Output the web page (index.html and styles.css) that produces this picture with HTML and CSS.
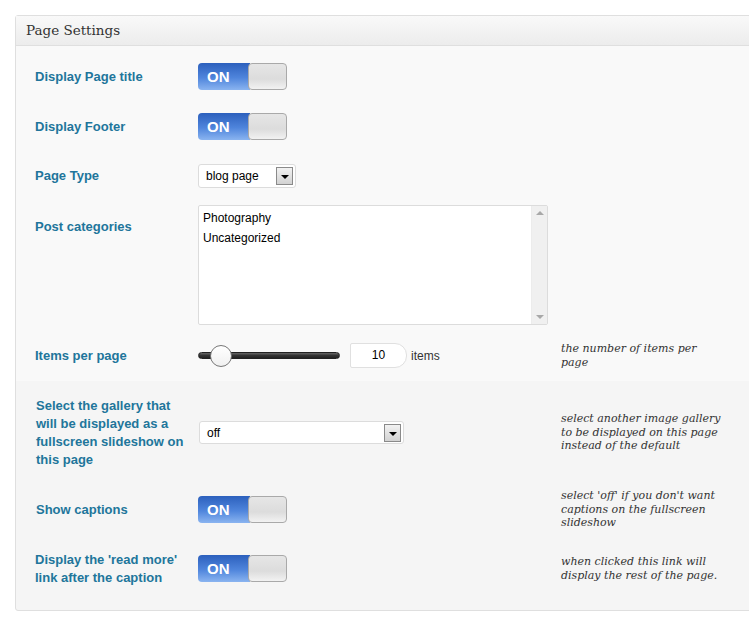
FILE: index.html
```html
<!DOCTYPE html>
<html>
<head>
<meta charset="utf-8">
<link rel="stylesheet" href="styles.css">
</head>
<body>
<div class="page">
  <div class="box">
    <div class="box-head">Page Settings</div>
    <div class="rows">
      <div class="row r1 light">
        <div class="label">Display Page title</div>
        <div class="ctrl"><div class="toggle"><span class="on">ON</span><span class="knob"></span></div></div>
        <div class="desc"></div>
      </div>
      <div class="row r2 light">
        <div class="label">Display Footer</div>
        <div class="ctrl"><div class="toggle"><span class="on">ON</span><span class="knob"></span></div></div>
        <div class="desc"></div>
      </div>
      <div class="row r3 light">
        <div class="label">Page Type</div>
        <div class="ctrl"><div class="select small"><span class="sel-text">blog page</span><span class="arrow"></span></div></div>
        <div class="desc"></div>
      </div>
      <div class="row r4 light top">
        <div class="label lab-top">Post categories</div>
        <div class="ctrl">
          <div class="listbox">
            <div class="options">
              <div class="opt">Photography</div>
              <div class="opt">Uncategorized</div>
            </div>
            <div class="scroll"><span class="up"></span><span class="down"></span></div>
          </div>
        </div>
        <div class="desc"></div>
      </div>
      <div class="row r5 light">
        <div class="label">Items per page</div>
        <div class="ctrl slider-ctrl">
          <div class="slider"><div class="track"></div><div class="handle"></div></div>
          <div class="num">10</div>
          <span class="unit">items</span>
        </div>
        <div class="desc">the number of items per<br>page</div>
      </div>
      <div class="row r6">
        <div class="label lab-ml">Select the gallery that will be displayed as a fullscreen slideshow on this page</div>
        <div class="ctrl"><div class="select wide"><span class="sel-text">off</span><span class="arrow"></span></div></div>
        <div class="desc">select another image gallery<br>to be displayed on this page<br>instead of the default</div>
      </div>
      <div class="row r7">
        <div class="label lab-ml">Show captions</div>
        <div class="ctrl"><div class="toggle"><span class="on">ON</span><span class="knob"></span></div></div>
        <div class="desc">select 'off' if you don't want<br>captions on the fullscreen<br>slideshow</div>
      </div>
      <div class="row r8">
        <div class="label">Display the 'read more' link after the caption</div>
        <div class="ctrl"><div class="toggle"><span class="on">ON</span><span class="knob"></span></div></div>
        <div class="desc">when clicked this link will<br>display the rest of the page.</div>
      </div>
    </div>
  </div>
</div>
</body>
</html>
```

FILE: styles.css
```css
html, body {
  margin: 0;
  padding: 0;
  background: #ffffff;
  overflow: hidden;
}
.page {
  width: 749px;
  height: 630px;
  padding: 15px 0 0 15px;
  box-sizing: border-box;
  overflow: hidden;
}
.box {
  width: 760px;
  border: 1px solid #dfdfdf;
  border-radius: 3px;
  background: #f5f5f5;
}
.box-head {
  height: 29px;
  line-height: 29px;
  padding-left: 10px;
  font-family: "DejaVu Serif", Georgia, serif;
  font-size: 13.5px;
  color: #333;
  background: linear-gradient(#f9f9f9, #ececec);
  border-bottom: 1px solid #dfdfdf;
}
.rows {
  padding: 0 0 8px 0;
}
.row {
  display: grid;
  grid-template-columns: 163px 363px 1fr;
  align-items: center;
  padding-left: 19px;
  box-sizing: border-box;
}
.row.light { background: #f9f9f9; }
.row.top { align-items: start; }
.r1 { height: 55px; padding-top: 6px; }
.r2 { height: 51px; }
.r3 { height: 48px; }
.r4 { height: 130px; padding-top: 5px; }
.r5 { height: 51px; }
.r6 { height: 103px; }
.r7 { height: 51px; }
.r8 { height: 67px; }

.label {
  font-family: "Liberation Sans", Arial, sans-serif;
  font-weight: bold;
  font-size: 13px;
  line-height: 18px;
  color: #21759b;
  width: 152px;
}
.lab-ml { padding-left: 1px; }
.lab-top { margin-top: 13px; }

.desc {
  font-family: "DejaVu Serif", Georgia, serif;
  font-style: italic;
  font-size: 11px;
  line-height: 13.5px;
  color: #333;
  white-space: nowrap;
}

/* toggle */
.toggle {
  display: flex;
  width: 89px;
  height: 27px;
}
.on {
  width: 52px;
  height: 27px;
  box-sizing: border-box;
  border-radius: 4px 0 0 4px;
  background: linear-gradient(#2c60bd, #4f85dc 55%, #8ab4f0);
  color: #fff;
  font-family: "Liberation Sans", Arial, sans-serif;
  font-weight: bold;
  font-size: 15px;
  line-height: 28px;
  padding-left: 9px;
}
.knob {
  width: 39px;
  height: 27px;
  margin-left: -2px;
  box-sizing: border-box;
  border: 1px solid #a9a9a9;
  border-radius: 4px;
  background: linear-gradient(#e6e6e6, #dcdcdc 60%, #f2f2f2);
}

/* select */
.select {
  display: flex;
  align-items: center;
  justify-content: space-between;
  box-sizing: border-box;
  height: 24px;
  border: 1px solid #dcdcdc;
  border-radius: 3px;
  background: #fff;
  padding: 0 2px 0 7px;
  font-family: "Liberation Sans", Arial, sans-serif;
  font-size: 12px;
  color: #000;
}
.select.small { width: 98px; }
.select.wide { width: 205px; height: 23px; margin-left: 1px; }
.arrow {
  position: relative;
  width: 17px;
  height: 18px;
  box-sizing: border-box;
  border: 1px solid #8a8a8a;
  background: linear-gradient(#f2f2f2, #d2d2d2);
}
.arrow::after {
  content: "";
  position: absolute;
  left: 4px;
  top: 7px;
  border-left: 4px solid transparent;
  border-right: 4px solid transparent;
  border-top: 4px solid #000;
}

/* listbox */
.listbox {
  display: flex;
  width: 350px;
  height: 120px;
  box-sizing: border-box;
  border: 1px solid #dcdcdc;
  border-radius: 2px;
  background: #fff;
}
.options {
  flex: 1;
  padding: 2px 4px;
  font-family: "Liberation Sans", Arial, sans-serif;
  font-size: 12px;
  line-height: 20px;
  color: #000;
}
.scroll {
  width: 16px;
  background: #f0f0f0;
  border-left: 1px solid #ececec;
  display: flex;
  flex-direction: column;
  justify-content: space-between;
  align-items: center;
  padding: 5px 0;
  box-sizing: border-box;
}
.up {
  border-left: 4px solid transparent;
  border-right: 4px solid transparent;
  border-bottom: 4px solid #a8a8a8;
}
.down {
  border-left: 4px solid transparent;
  border-right: 4px solid transparent;
  border-top: 4px solid #a8a8a8;
}

/* slider */
.slider-ctrl {
  display: flex;
  align-items: center;
}
.slider {
  position: relative;
  width: 142px;
  height: 24px;
  display: flex;
  align-items: center;
}
.track {
  width: 142px;
  height: 7px;
  box-sizing: border-box;
  border-radius: 4px;
  border: 1px solid #222;
  background: linear-gradient(#666, #333 50%, #222);
}
.handle {
  position: absolute;
  left: 12px;
  top: 1px;
  width: 22px;
  height: 22px;
  box-sizing: border-box;
  border: 1px solid #777;
  border-radius: 50%;
  background: linear-gradient(#ffffff, #f0f0f0);
}
.num {
  margin-left: 10px;
  width: 57px;
  height: 25px;
  box-sizing: border-box;
  border: 1px solid #e0e0e0;
  border-radius: 2px 12px 12px 2px;
  background: #fff;
  text-align: center;
  font-family: "Liberation Sans", Arial, sans-serif;
  font-size: 12px;
  line-height: 23px;
  color: #000;
}
.unit {
  margin-left: 4px;
  font-family: "Liberation Sans", Arial, sans-serif;
  font-size: 12px;
  color: #333;
}
```
